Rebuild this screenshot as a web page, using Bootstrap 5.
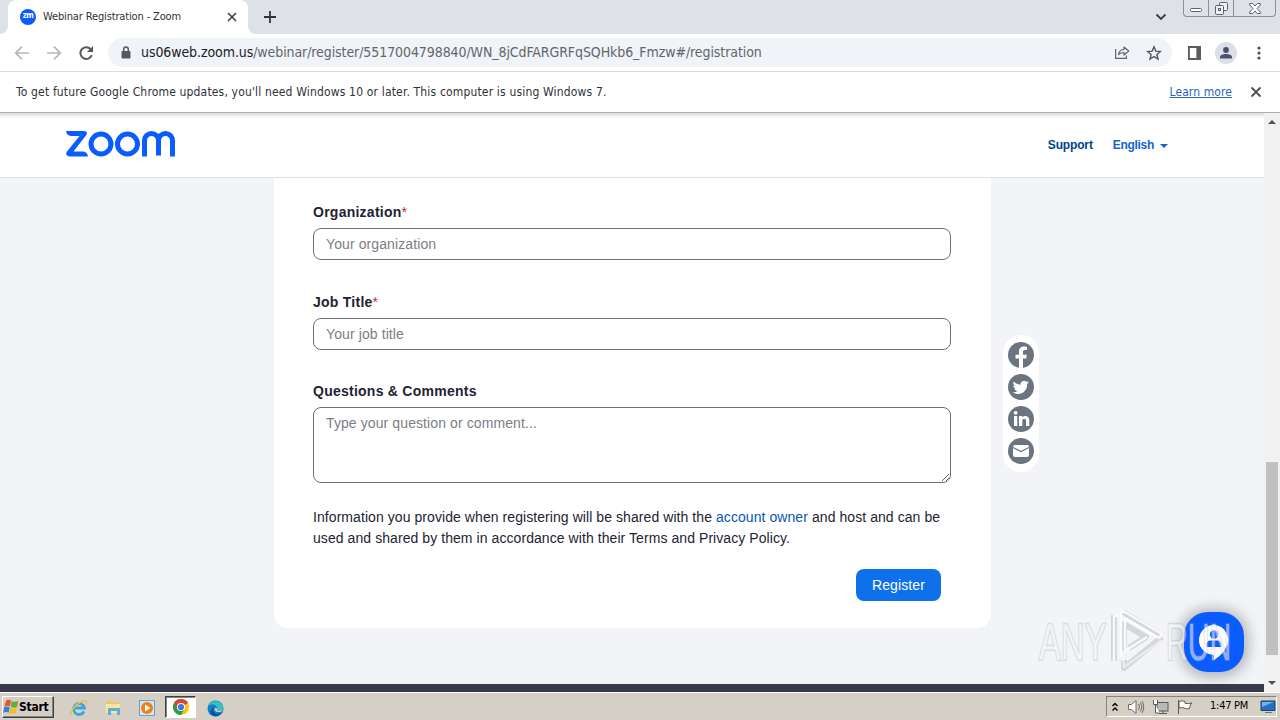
<!DOCTYPE html>
<html lang="en">
<head>
    <meta charset="UTF-8">
    <meta name="viewport" content="width=device-width, initial-scale=1.0">
    <title>Webinar Registration - Zoom</title>
    <link rel="stylesheet" href="https://cdn.jsdelivr.net/npm/bootstrap@5.3.0/dist/css/bootstrap.min.css">
<style>

body {
    width: 1280px;
    height: 720px;
    overflow: hidden;
    font-family: "DejaVu Sans Condensed", "DejaVu Sans", sans-serif;
    font-size: 11px;
    color: #303236;
    background-color: #fff;
}

svg {
    display: block;
    flex-shrink: 0;
}

/* browser window */
.tab-strip {
    height: 34px;
    background-color: #dee1e8;
}

.tab-edge {
    width: 8px;
    background-color: #fff;
}

.tab-edge span {
    display: block;
    height: 100%;
    background-color: #dee1e8;
}

.tab-edge-left span {
    border-bottom-right-radius: 8px;
}

.tab-edge-right span {
    border-bottom-left-radius: 8px;
}

.page-tab {
    width: 240px;
    background-color: #fff;
    border-radius: 8px 8px 0 0;
    padding: 0 10px 0 12px;
}

.favicon {
    width: 16px;
    height: 16px;
    border-radius: 50%;
    background-color: #0b5cff;
    color: #fff;
    font-size: 8px;
    font-weight: bold;
    line-height: 14px;
    text-align: center;
    letter-spacing: -0.5px;
}

.tab-title {
    margin-left: 7px;
    font-size: 11px;
    letter-spacing: -0.14px;
}

.window-buttons {
    width: 93px;
    height: 17px;
    border: 1px solid #8d9097;
    border-top: 0;
    border-radius: 0 0 4px 4px;
}

.window-buttons span {
    width: 25px;
    border-right: 1px solid #8d9097;
}

.window-buttons span:last-child {
    width: 41px;
    border-right: 0;
}

.toolbar {
    height: 38px;
    border-bottom: 1px solid #d9dbde;
    padding: 0 13px;
}

.address {
    width: 1064px;
    height: 29px;
    margin-left: 14px;
    border-radius: 15px;
    background-color: #f0f3f7;
    padding: 0 10px 0 13px;
}

.address-text {
    margin-left: 10px;
    font-size: 14px;
    letter-spacing: -0.085px;
    color: #62666b;
    white-space: nowrap;
}

.address-text b {
    font-weight: normal;
    color: #202124;
}

.profile {
    width: 22px;
    height: 22px;
    border-radius: 50%;
    background-color: #dbdfe7;
    margin-left: 14px;
}

.infobar {
    height: 41px;
    border-bottom: 1px solid #aeb0b0;
    padding: 0 18px 0 16px;
}

.infobar-text {
    font-size: 12px;
    letter-spacing: 0.165px;
}

.infobar a {
    font-size: 12px;
    letter-spacing: 0.1px;
    color: #2a64bd;
    margin-right: 2px;
}

/* web page */
.viewport {
    height: 579px;
    font-family: "Liberation Sans", Arial, sans-serif;
}

.page {
    width: 1264px;
    background-color: #f2f4f8;
}

.site-header {
    height: 65px;
    background: linear-gradient(#dadada, #fff 5px);
    border-bottom: 1px solid #dcdfe5;
    padding: 0 96px 0 65px;
}

.zoom-logo {
    margin-top: -2px;
}

.site-header a {
    font-size: 12px;
    font-weight: bold;
    letter-spacing: -0.15px;
    color: #00438b;
    text-decoration: none;
}

.site-header a.lang {
    color: #1464d0;
    margin-left: 20px;
    letter-spacing: -0.3px;
}

.lang svg {
    margin: 2px 0 0 6px;
}

.form-panel {
    width: 717px;
    height: 450px;
    margin-left: 274px;
    background-color: #fff;
    border-radius: 0 0 14px 14px;
    padding: 24px 40px 0 39px;
    font-size: 14px;
    color: #232333;
}

.form-panel label {
    display: block;
    font-weight: bold;
    line-height: 20px;
    letter-spacing: 0.25px;
    margin-bottom: 6px;
}

.form-panel label span {
    font-weight: normal;
    color: #c22a3a;
}

.field {
    height: 32px;
    border: 1px solid #6e7077;
    border-radius: 8px;
    padding: 0 12px;
    font-size: 14px;
    letter-spacing: 0.1px;
    margin-bottom: 32px;
}

.job-field {
    margin-bottom: 31px;
}

.field::placeholder {
    color: #7c7e86;
    opacity: 1;
}

textarea.field {
    height: 76px;
    padding: 5px 12px;
    margin-bottom: 24px;
    resize: vertical;
}

.notice {
    line-height: 21px;
    letter-spacing: 0.07px;
    margin-bottom: 20px;
    white-space: nowrap;
}

.notice a {
    color: #0956b5;
    text-decoration: none;
}

.register-btn {
    width: 85px;
    height: 32px;
    padding: 0;
    margin-right: 10px;
    border: 0;
    border-radius: 8px;
    background-color: #0e71eb;
    color: #fff;
    font-size: 14px;
    letter-spacing: 0.13px;
}

.share {
    width: 36px;
    height: 137px;
    margin: 157px 0 0 12px;
    padding: 7px 0;
    border-radius: 18px;
    background-color: #fff;
    gap: 6px;
}

.page-footer {
    height: 8px;
    background-color: #39394d;
}

.scrollbar {
    width: 16px;
    background-color: #f1f1f1;
    padding: 7px 0;
}

.scroll-thumb {
    width: 12px;
    height: 193px;
    margin-top: 338px;
    background-color: #c1c1c1;
}

.watermark {
    left: 1036px;
    top: 607px;
}

.chat {
    left: 1184px;
    top: 612px;
    width: 60px;
    height: 60px;
    border-radius: 24px;
    background-color: #0b5cff;
    box-shadow: 0 1px 14px 4px rgba(0, 0, 0, 0.28);
}

/* desktop taskbar */
.taskbar {
    height: 28px;
    background-color: #d5cfc6;
    box-shadow: inset 0 1px #fff;
    padding: 4px 0 0 2px;
    color: #000;
}

.start {
    width: 52px;
    height: 22px;
    border: 1px solid;
    border-color: #fff #404040 #404040 #fff;
    box-shadow: inset -1px -1px #88847c;
    font-size: 12px;
    font-weight: bold;
    letter-spacing: -0.25px;
}

.task-active {
    width: 31px;
    height: 22px;
    margin-left: 10px;
    margin-right: 11px;
    border: 1px solid;
    border-color: #404040 #fff #fff #404040;
    box-shadow: inset 1px 1px #88847c;
    background-color: #fff;
}

.tray {
    width: 171px;
    height: 21px;
    margin-right: 3px;
    border: 1px solid;
    border-color: #88847c #fff #fff #88847c;
}

.clock {
    letter-spacing: -0.25px;
    margin-left: 17px;
}

</style>
</head>
<body class="d-flex flex-column">

    <div class="tab-strip d-flex align-items-stretch flex-shrink-0">
        <div class="tab-edge tab-edge-left"><span></span></div>
        <div class="page-tab d-flex align-items-center">
            <div class="favicon">zm</div>
            <div class="tab-title">Webinar Registration - Zoom</div>
            <svg class="ms-auto" width="12" height="12" viewBox="0 0 12 12" stroke="#3c4043" stroke-width="1.6"><path d="M2 2l8 8M10 2l-8 8"/></svg>
        </div>
        <div class="tab-edge tab-edge-right"><span></span></div>
        <svg class="align-self-center ms-2" width="12" height="12" viewBox="0 0 12 12" stroke="#303338" stroke-width="1.8"><path d="M6 0v12M0 6h12"/></svg>
        <svg class="align-self-center ms-auto me-3" width="12" height="10" viewBox="0 0 12 10" fill="none" stroke="#3c4043" stroke-width="1.9"><path d="M1.5 2.5L6 7l4.500-4.500"/></svg>
        <div class="window-buttons d-flex me-1">
            <span class="d-flex justify-content-center align-items-end pb-1"><svg width="12" height="4" viewBox="0 0 12 4" fill="#fff" stroke="#5e6167"><rect x=".5" y=".5" width="11" height="3" rx="1"/></svg></span>
            <span class="d-flex justify-content-center align-items-center"><svg width="13" height="13" viewBox="0 0 13 13" fill="#eef0f3" stroke="#5e6167"><rect x="4.500" y=".5" width="8" height="8" rx="1"/><rect x=".5" y="3.500" width="8" height="9" rx="1"/><rect x="3.500" y="6.500" width="2" height="2"/></svg></span>
            <span class="d-flex justify-content-center align-items-center"><svg width="12" height="11" viewBox="0 0 12 11" fill="#fff" stroke="#5e6167"><path d="M.7.5h3L6 3 8.300.5h3v1.500L8 5.500l3.300 3.500v1.500h-3L6 8l-2.300 2.500h-3V9L4 5.500.7 2z"/></svg></span>
        </div>
    </div>

    <div class="toolbar d-flex align-items-center flex-shrink-0">
        <svg width="18" height="16" viewBox="0 0 18 16" fill="none" stroke="#b5b7ba" stroke-width="1.7"><path d="M16 8H3M9 1.700L2.700 8 9 14.300"/></svg>
        <svg class="ms-3" width="16" height="16" viewBox="0 0 16 16" fill="none" stroke="#b5b7ba" stroke-width="1.700"><path d="M0 8h13M7 1.700L13.300 8 7 14.300"/></svg>
        <svg class="ms-3" width="15" height="16" viewBox="0 0 15 16" fill="none" stroke="#55585c" stroke-width="2"><path d="M12.800 10.200A5.900 5.900 0 1 1 11.600 4"/><path d="M14 1v6H8z" fill="#55585c" stroke="none"/></svg>
        <div class="address d-flex align-items-center">
            <svg width="10" height="13" viewBox="0 0 10 13" fill="none" stroke="#55585c" stroke-width="1.500"><path d="M2.700 6V3.300a2.300 2.300 0 0 1 4.600 0V6"/><rect x=".5" y="5" width="9" height="7.500" rx="1" fill="#55585c" stroke="none"/></svg>
            <div class="address-text"><b>us06web.zoom.us</b>/webinar/register/5517004798840/WN_8jCdFARGRFqSQHkb6_Fmzw#/registration</div>
            <svg class="ms-auto" width="16" height="15" viewBox="0 0 16 15" fill="none" stroke="#62656a" stroke-width="1.200"><path d="M1.600 4v9.400h10.800v-3"/><path d="M4.500 9.500C5 6 7 4.500 10 4.500V2l4.800 4L10 10V7.500c-2.500 0-4 .5-5.500 2z" stroke-linejoin="round"/></svg>
            <svg class="ms-3" width="16" height="16" viewBox="0 0 16 16" fill="none" stroke="#55585c" stroke-width="1.400"><path d="M8 1.800l1.800 4.300 4.600.4-3.500 3 1.100 4.500L8 11.600 4 14l1.100-4.500-3.500-3 4.600-.4z"/></svg>
        </div>
        <svg class="ms-3" width="13" height="14" viewBox="0 0 14 14" preserveAspectRatio="none"><path d="M0 0h14v14H0z" fill="#5a5c60"/><path d="M2 2h7v10H2z" fill="#fff"/></svg>
        <div class="profile d-flex justify-content-center align-items-center">
            <svg width="14" height="14" viewBox="0 0 14 14" fill="#48536a"><circle cx="7" cy="4" r="2.900"/><path d="M1 12.500V11c0-2 3-3 6-3s6 1 6 3v1.500z"/></svg>
        </div>
        <svg class="ms-auto me-1" width="8" height="14" viewBox="0 0 8 14" fill="#4c4f53"><circle cx="4" cy="2" r="1.600"/><circle cx="4" cy="7" r="1.600"/><circle cx="4" cy="12" r="1.600"/></svg>
    </div>

    <div class="infobar d-flex align-items-center flex-shrink-0">
        <div class="infobar-text">To get future Google Chrome updates, you'll need Windows 10 or later. This computer is using Windows 7.</div>
        <a class="ms-auto" href="#">Learn more</a>
        <svg class="ms-3" width="12" height="12" viewBox="0 0 12 12" stroke="#4b4e52" stroke-width="1.800"><path d="M1.500 1.500l9 9M10.500 1.500l-9 9"/></svg>
    </div>

    <div class="viewport d-flex flex-shrink-0">
        <div class="page d-flex flex-column">
            <header class="site-header d-flex align-items-center flex-shrink-0">
                <svg class="zoom-logo" width="111" height="26" viewBox="0 0 111 26" fill="none" stroke="#0b5cff" stroke-width="5">
                    <path d="M1 0h18.500q3.800.6 1.800 4L8.500 20.500H18q4.500.5 5 5H4Q-.5 24 2 20.500L14.500 5H6Q1.500 4.500 1 0z" fill="#0b5cff" stroke="none"/>
                    <circle cx="36" cy="13" r="10"/>
                    <circle cx="62.500" cy="13" r="10"/>
                    <path d="M79.500 25.500V9.500a7 7 0 0 1 14 0v15M93.500 9.500a7 7 0 0 1 14 0v16"/>
                </svg>
                <a class="ms-auto" href="#">Support</a>
                <a class="lang d-flex align-items-center" href="#">English<svg width="8" height="4" viewBox="0 0 8 4" fill="#1464d0"><path d="M0 0h8L4 4z"/></svg></a>
            </header>

            <main class="d-flex flex-grow-1">
                <form class="form-panel">
                    <label for="organization">Organization<span>*</span></label>
                    <input type="text" class="form-control field" id="organization" placeholder="Your organization">
                    <label for="jobTitle">Job Title<span>*</span></label>
                    <input type="text" class="form-control field job-field" id="jobTitle" placeholder="Your job title">
                    <label for="comments">Questions &amp; Comments</label>
                    <textarea class="form-control field" id="comments" placeholder="Type your question or comment..."></textarea>
                    <p class="notice">Information you provide when registering will be shared with the <a href="#">account owner</a> and host and can be<br>used and shared by them in accordance with their Terms and Privacy Policy.</p>
                    <div class="d-flex justify-content-end">
                        <button type="button" class="btn register-btn">Register</button>
                    </div>
                </form>
                <div class="share d-flex flex-column align-items-center">
                    <svg width="26" height="26" viewBox="0 0 26 26"><circle cx="13" cy="13" r="13" fill="#6c757f"/><path d="M11 26v-9.500H7.500v-3.700H11V10c0-3.700 2-5.400 5.200-5.400l2.800.2v3.300h-1.800c-1.700 0-2.200.8-2.200 2.100v2.600h3.800l-.6 3.700H15V26z" fill="#fff"/></svg>
                    <svg width="26" height="26" viewBox="0 0 26 26"><circle cx="13" cy="13" r="13" fill="#6c757f"/><path d="M20.800 8.300c-.6.300-1.200.4-1.900.5.700-.4 1.200-1 1.400-1.800-.6.400-1.300.6-2 .8a3.300 3.300 0 0 0-5.600 3A9.300 9.300 0 0 1 5.900 7.400a3.300 3.300 0 0 0 1 4.400c-.5 0-1-.2-1.500-.4 0 1.600 1.100 2.900 2.600 3.200-.5.100-1 .1-1.500.1.400 1.300 1.600 2.200 3.100 2.300a6.600 6.600 0 0 1-4.900 1.300c7.300 4.500 14.700-.6 14.500-8.400.6-.4 1.100-1 1.600-1.600z" fill="#fff"/></svg>
                    <svg width="26" height="26" viewBox="0 0 26 26"><circle cx="13" cy="13" r="13" fill="#6c757f"/><path d="M6 10h3.300v10H6zM11 10h3.300v1.500c1.700-2.400 7-2 7 2.400V20H18v-5c0-3-3.700-2.700-3.700 0v5H11z" fill="#fff"/><circle cx="7.600" cy="6.800" r="1.900" fill="#fff"/></svg>
                    <svg width="26" height="26" viewBox="0 0 26 26"><circle cx="13" cy="13" r="13" fill="#6c757f"/><rect x="5" y="7" width="16" height="12" rx="2" fill="#fff"/><path d="M5 9.500l8 4 8-4" fill="none" stroke="#6c757f" stroke-width="1.200"/></svg>
                </div>
            </main>
            <footer class="page-footer flex-shrink-0"></footer>
        </div>
        <div class="scrollbar d-flex flex-column align-items-center">
            <svg width="8" height="4" viewBox="0 0 8 4" fill="#505050"><path d="M0 4h8L4 0z"/></svg>
            <div class="scroll-thumb"></div>
            <svg class="mt-auto" width="8" height="4" viewBox="0 0 8 4" fill="#505050"><path d="M0 0h8L4 4z"/></svg>
        </div>
    </div>

    <div class="taskbar d-flex flex-shrink-0">
        <div class="start d-flex align-items-center">
            <svg width="16" height="16" viewBox="0 0 16 16"><path d="M3 1.500q2.500-1.500 5 0L7 7.500q-2.500-1.500-5.500 0z" fill="#e4572a"/><path d="M8.700 2q2.500 1.500 6.500 0l-1 6q-3 1.500-6.500 0z" fill="#69ae3c"/><path d="M1.200 8.200q2.500-1.500 5.500 0l-1 5.500q-2.500-1.500-5.500 0z" fill="#3a7fd0"/><path d="M7.500 8.700q3 1.500 6.500 0l-1 5.500q-3 1.500-6.500 0z" fill="#f3bd2b"/></svg>
            <span>Start</span>
        </div>
        <svg class="align-self-center ms-3" width="18" height="18" viewBox="0 0 18 18" fill="none"><path d="M14 12.500A5.500 5.500 0 1 1 14.500 9H5" stroke="#3fa5e0" stroke-width="2.800"/><path d="M2 15C-2 17 4 6 11 3s6 0 4.500 2.500" stroke="#edbd3d" stroke-width="1.400"/></svg>
        <svg class="align-self-center ms-3" width="18" height="16" viewBox="0 0 18 16"><path d="M2 1h5l1 1h7v11H2z" fill="#e9c766"/><path d="M2 4h14v9H2z" fill="#f9e6a1"/><path d="M4 15V8h12v7h-3v-4H7v4z" fill="#63acd0"/></svg>
        <svg class="align-self-center ms-3" width="17" height="16" viewBox="-1 0 17 16"><rect x=".5" y=".5" width="15" height="15" fill="#d4e6f3" stroke="#6fa1c8"/><circle cx="8" cy="8" r="6" fill="#ef8214"/><path d="M6 4.500L11.500 8 6 11.500z" fill="#fff"/></svg>
        <div class="task-active d-flex justify-content-center align-items-center">
            <svg width="16" height="16" viewBox="0 0 16 16"><circle cx="8" cy="8" r="8" fill="#fbc116"/><path d="M8 8L1.070 4A8 8 0 0 1 14.930 4z" fill="#dc4437"/><path d="M1.070 4A8 8 0 0 0 8 16l3.500-6L8 8z" fill="#279c54"/><path d="M1.070 4L4.500 10 8 8V4.200h7L13 1.800 5 .6z" fill="#dc4437"/><circle cx="8" cy="8" r="4" fill="#fff"/><circle cx="8" cy="8" r="3.100" fill="#3978dd"/></svg>
        </div>
        <svg class="align-self-center" width="17" height="17" viewBox="0 0 17 17"><circle cx="8.500" cy="8.500" r="8" fill="#147fca"/><path d="M1 6C3 0 14-1 16.300 7c.5 4-4 5-6 3 1-5-5-7-9.300-4z" fill="#38bfc0"/><path d="M7 7.500c-3 4 2 8 7 5.500-1.500 3-5 4-8 2.500-4-2-3-7 1-8z" fill="#134e9d"/><path d="M8 8c-1.500 3 2 5 6.500 3.500L16 10l-4 1c-2 0-2-1-1.500-2.500z" fill="#d5cfc6"/></svg>

        <div class="tray d-flex align-items-center ms-auto">
            <svg class="ms-1" width="8" height="10" viewBox="0 0 8 10" fill="none" stroke="#000" stroke-width="1.400"><path d="M1.500 4L4 1.500 6.500 4M1.500 8.500L4 6l2.500 2.500"/></svg>
            <svg class="ms-2" width="18" height="16" viewBox="0 0 18 16" fill="none" stroke="#716e69"><path d="M1.500 5.500h3L9 1.500v13l-4.500-4h-3z" fill="#fff"/><path d="M11.500 5q2 3 0 6M13.500 3.500q3 4.500 0 9M15 2q3.500 6 0 12"/></svg>
            <svg class="ms-2" width="16" height="16" viewBox="0 0 16 16" fill="#fff" stroke="#5d5b57"><rect x="4" y="3.500" width="11" height="8.500" fill="#b9b9b7"/><path d="M6 14.500h8M10 12v2"/><path d="M.5 1v4.500h4V1M2.500 5.500v8.500h4"/></svg>
            <svg class="ms-2" width="16" height="16" viewBox="0 0 16 16" fill="#fff" stroke="#5d5b57"><path d="M1.500 1v14M2 2.500q3-1.500 6 0v1.800q3 .8 7-.3-2 1-2.500 5.500-3 1-5.500-.5-2.500-1-5 0z"/></svg>
            <span class="clock">1:47 PM</span>
            <svg class="ms-auto" width="16" height="14" viewBox="0 0 16 14"><path d="M1 1h14v9.500H1z" fill="#256ec5" stroke="#254064"/><path d="M2 2h12L2 7z" fill="#6fb2ec"/><path d="M5 12h7v1H5z" fill="#56789c"/></svg>
        </div>
    </div>

    <!-- floating layers over the page -->
    <div class="chat position-absolute d-flex justify-content-center align-items-center">
        <svg width="32" height="38" viewBox="0 0 32 38"><path d="M16 2a15 15 0 1 0 0 30v5q8-5 11.500-11.500A15 15 0 0 0 16 2z" fill="#fff"/><circle cx="16" cy="11.500" r="4.200" fill="#0b5cff"/><path d="M8.500 24v-2q0-4.500 4-4.500h7q4 0 4 4.500v2z" fill="#0b5cff"/></svg>
    </div>
    <svg class="watermark position-absolute" width="244" height="70" viewBox="0 0 244 70" font-family="Liberation Sans, Arial, sans-serif" font-size="52">
        <g fill="none" stroke="#b4b7bd" stroke-opacity=".5" stroke-width="6" stroke-linejoin="round">
            <path d="M78 54V8M87 5l39 24M126 30L88 61v-8M88 44V17l22 13-17 11"/>
        </g>
        <g fill="none" stroke="#fff" stroke-opacity=".85" stroke-width="2.400" stroke-linejoin="round">
            <path d="M83 9h-5v45M85 50V5h4l37 22-3 4-34-20v33l22-14"/>
            <path d="M126 33L88 60l-1-9" stroke-opacity=".5"/>
        </g>
        <g fill="#fff" fill-opacity=".5" stroke="#9da0a6" stroke-opacity=".3" stroke-width="2.500" paint-order="stroke">
            <text transform="translate(3 53) scale(.63 1)">ANY</text>
            <text transform="translate(130 53) scale(.58 1)">RUN</text>
        </g>
    </svg>

    <script src="https://cdn.jsdelivr.net/npm/bootstrap@5.3.0/dist/js/bootstrap.bundle.min.js"></script>
</body>
</html>
